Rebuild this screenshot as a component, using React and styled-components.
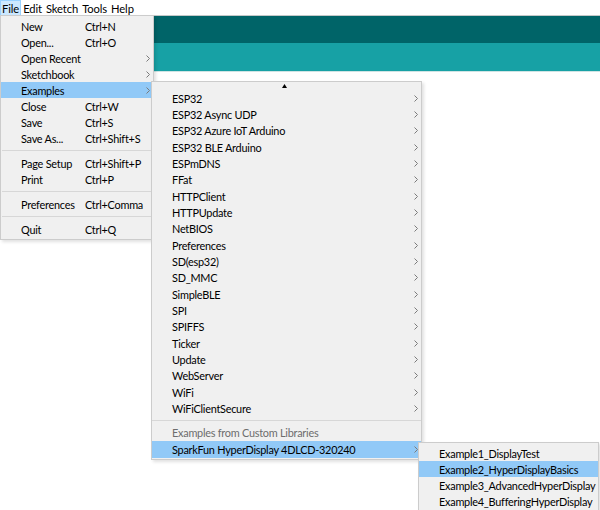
import React from "react";
import styled, { createGlobalStyle } from "styled-components";

const GlobalStyle = createGlobalStyle`
  html, body { margin: 0; padding: 0; background: #fff; }
  body {
    font-family: Lato, "Noto Sans", sans-serif;
    font-size: 10.9px;
    letter-spacing: -0.25px;
    color: #000;
  }
`;

const Screen = styled.div`
  position: relative;
  width: 600px;
  height: 510px;
  overflow: hidden;
  background: #fff;
`;

const MenuBar = styled.div`
  display: flex;
  align-items: center;
  height: 15px;
  background: #fff;
  font-size: 11.2px;
  letter-spacing: -0.1px;
`;

const MenuBarItem = styled.div`
  height: 15px;
  line-height: 15px;
  padding: 0 1px;
  box-sizing: border-box;
  background: ${(p) => (p.$active ? "#cce8ff" : "transparent")};
  border: 1px solid ${(p) => (p.$active ? "#99d1ff" : "transparent")};
  border-bottom: none;
  display: flex;
  align-items: center;
`;

const Toolbar = styled.div`
  height: 27px;
  background: #006468;
  border-top: 1px solid #c4c8c8;
`;

const TabBar = styled.div`
  height: 28px;
  background: #17a1a5;
  border-bottom: 1px solid #cfe4e4;
`;

const Menu = styled.div`
  position: absolute;
  top: ${(p) => p.$top}px;
  left: ${(p) => p.$left}px;
  width: ${(p) => p.$width}px;
  box-sizing: border-box;
  background: #f0f0f0;
  border: 1px solid #cccccc;
  box-shadow: 2px 2px 3px rgba(0, 0, 0, 0.12);
  padding: ${(p) => p.$pad || "2px 0"};
  display: flex;
  flex-direction: column;
`;

const Item = styled.div`
  display: grid;
  grid-template-columns: ${(p) => p.$cols};
  align-items: center;
  height: ${(p) => p.$h || 16}px;
  padding-left: 20px;
  padding-right: 3px;
  background: ${(p) => (p.$hl ? "#91c9f7" : "transparent")};
  color: ${(p) => (p.$dim ? "#6d6d6d" : "#000")};
  white-space: nowrap;
`;

const Label = styled.span``;
const Shortcut = styled.span``;

const ArrowCell = styled.span`
  display: flex;
  justify-content: flex-end;
  align-items: center;
`;

const Separator = styled.div`
  height: ${(p) => p.$h || 9}px;
  display: flex;
  align-items: center;
  padding-left: ${(p) => p.$indent || 0}px;
  &::after {
    content: "";
    flex: 1;
    height: 1px;
    background: #d7d7d7;
  }
`;

const ScrollUp = styled.div`
  height: 8px;
  display: flex;
  justify-content: center;
  align-items: center;
  margin-left: -4px;
`;

const Chevron = () => (
  <svg width="4" height="7" viewBox="0 0 4 7">
    <path d="M0.5 0.5 L3.5 3.5 L0.5 6.5" fill="none" stroke="#7a7a7a" strokeWidth="1" />
  </svg>
);

const fileItems = [
  { l: "New", s: "Ctrl+N" },
  { l: "Open...", s: "Ctrl+O" },
  { l: "Open Recent", a: true },
  { l: "Sketchbook", a: true },
  { l: "Examples", a: true, hl: true },
  { l: "Close", s: "Ctrl+W" },
  { l: "Save", s: "Ctrl+S" },
  { l: "Save As...", s: "Ctrl+Shift+S" },
  { sep: true },
  { l: "Page Setup", s: "Ctrl+Shift+P" },
  { l: "Print", s: "Ctrl+P" },
  { sep: true },
  { l: "Preferences", s: "Ctrl+Comma" },
  { sep: true },
  { l: "Quit", s: "Ctrl+Q" },
];

const examples = [
  "ESP32",
  "ESP32 Async UDP",
  "ESP32 Azure IoT Arduino",
  "ESP32 BLE Arduino",
  "ESPmDNS",
  "FFat",
  "HTTPClient",
  "HTTPUpdate",
  "NetBIOS",
  "Preferences",
  "SD(esp32)",
  "SD_MMC",
  "SimpleBLE",
  "SPI",
  "SPIFFS",
  "Ticker",
  "Update",
  "WebServer",
  "WiFi",
  "WiFiClientSecure",
];

const sketches = [
  "Example1_DisplayTest",
  "Example2_HyperDisplayBasics",
  "Example3_AdvancedHyperDisplay",
  "Example4_BufferingHyperDisplay",
];

export default function App() {
  return (
    <>
      <GlobalStyle />
      <Screen>
        <MenuBar>
          <MenuBarItem $active>File</MenuBarItem>
          <MenuBarItem>Edit</MenuBarItem>
          <MenuBarItem>Sketch</MenuBarItem>
          <MenuBarItem>Tools</MenuBarItem>
          <MenuBarItem>Help</MenuBarItem>
        </MenuBar>
        <Toolbar />
        <TabBar />

        <Menu $top={15} $left={0} $width={154} $pad="2px 0 2px">
          {fileItems.map((it, i) =>
            it.sep ? (
              <Separator key={i} $indent={1} />
            ) : (
              <Item key={i} $cols="64px 1fr 8px" $hl={it.hl}>
                <Label>{it.l}</Label>
                <Shortcut>{it.s || ""}</Shortcut>
                <ArrowCell>{it.a && <Chevron />}</ArrowCell>
              </Item>
            )
          )}
        </Menu>

        <Menu $top={81} $left={151} $width={271} $pad="0 0 1px">
          <ScrollUp>
            <svg width="5" height="4" viewBox="0 0 5 4">
              <path d="M2.5 0 L5 4 L0 4 Z" fill="#000" />
            </svg>
          </ScrollUp>
          {examples.map((e) => (
            <Item key={e} $cols="1fr 8px" $h={16.33}>
              <Label>{e}</Label>
              <ArrowCell>
                <Chevron />
              </ArrowCell>
            </Item>
          ))}
          <Separator $h={7.5} />
          <Item $cols="1fr 8px" $h={16.5} $dim>
            <Label>Examples from Custom Libraries</Label>
            <span />
          </Item>
          <Item $cols="1fr 8px" $h={17.5} $hl>
            <Label>SparkFun HyperDisplay 4DLCD-320240</Label>
            <ArrowCell>
              <Chevron />
            </ArrowCell>
          </Item>
        </Menu>

        <Menu $top={442} $left={418} $width={181} $pad="2px 0 3px">
          {sketches.map((s, i) => (
            <Item key={s} $cols="1fr" $h={16} $hl={i === 1}>
              <Label>{s}</Label>
            </Item>
          ))}
        </Menu>
      </Screen>
    </>
  );
}
